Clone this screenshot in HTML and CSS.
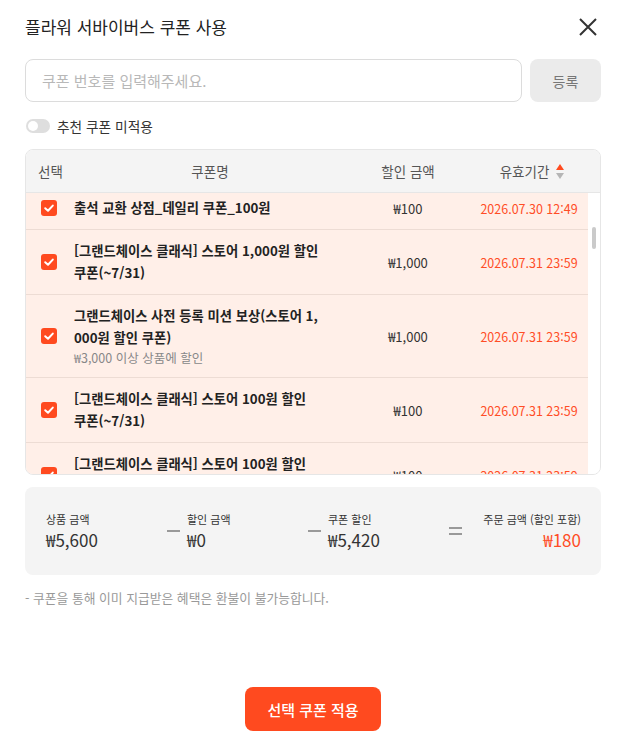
FILE: index.html
```html
<!DOCTYPE html>
<html lang="ko">
<head>
    <meta charset="utf-8">
    <title>쿠폰 사용</title>
    <link rel="stylesheet" href="styles.css">
</head>
<body>
    <div class="modal">
        <div class="modal-header">
            <h2>플라워 서바이버스 쿠폰 사용</h2>
            <button class="close-btn" aria-label="닫기">
                <svg width="20" height="20" viewBox="0 0 20 20"><path d="M2 2 L18 18 M18 2 L2 18" stroke="#333" stroke-width="2" fill="none"/></svg>
            </button>
        </div>

        <div class="code-row">
            <input type="text" class="code-input" placeholder="쿠폰 번호를 입력해주세요.">
            <button class="code-btn">등록</button>
        </div>

        <label class="auto-toggle">
            <span class="switch"><span class="knob"></span></span>
            추천 쿠폰 미적용
        </label>

        <div class="coupon-table">
            <div class="coupon-head">
                <div>선택</div>
                <div>쿠폰명</div>
                <div>할인 금액</div>
                <div class="sort-col">유효기간
                    <svg width="8" height="15" viewBox="0 0 8 15"><path d="M4 0 L8 6 L0 6 Z" fill="#ff4a1f"/><path d="M0 9 L8 9 L4 15 Z" fill="#b5b5b5"/></svg>
                </div>
            </div>
            <div class="coupon-list" id="coupon-list">
                <div class="coupon-row">
                    <div><span class="check"></span></div>
                    <div class="coupon-name">출석 교환 상점_데일리 쿠폰_100원</div>
                    <div class="coupon-amount">₩100</div>
                    <div class="coupon-date">2026.07.30 12:49</div>
                </div>
                <div class="coupon-row">
                    <div><span class="check"></span></div>
                    <div class="coupon-name">[그랜드체이스 클래식] 스토어 1,000원 할인<br>쿠폰(~7/31)</div>
                    <div class="coupon-amount">₩1,000</div>
                    <div class="coupon-date">2026.07.31 23:59</div>
                </div>
                <div class="coupon-row">
                    <div><span class="check"></span></div>
                    <div class="coupon-name">그랜드체이스 사전 등록 미션 보상(스토어 1,<br>000원 할인 쿠폰)
                        <small>₩3,000 이상 상품에 할인</small>
                    </div>
                    <div class="coupon-amount">₩1,000</div>
                    <div class="coupon-date">2026.07.31 23:59</div>
                </div>
                <div class="coupon-row">
                    <div><span class="check"></span></div>
                    <div class="coupon-name">[그랜드체이스 클래식] 스토어 100원 할인<br>쿠폰(~7/31)</div>
                    <div class="coupon-amount">₩100</div>
                    <div class="coupon-date">2026.07.31 23:59</div>
                </div>
                <div class="coupon-row">
                    <div><span class="check"></span></div>
                    <div class="coupon-name">[그랜드체이스 클래식] 스토어 100원 할인<br>쿠폰(~7/31)</div>
                    <div class="coupon-amount">₩100</div>
                    <div class="coupon-date">2026.07.31 23:59</div>
                </div>
                <div class="coupon-row">
                    <div><span class="check"></span></div>
                    <div class="coupon-name">[그랜드체이스 클래식] 스토어 500원 할인<br>쿠폰(~7/31)</div>
                    <div class="coupon-amount">₩500</div>
                    <div class="coupon-date">2026.07.31 23:59</div>
                </div>
                <div class="coupon-row">
                    <div><span class="check"></span></div>
                    <div class="coupon-name">출석 교환 상점_주간 쿠폰_300원</div>
                    <div class="coupon-amount">₩300</div>
                    <div class="coupon-date">2026.08.02 23:59</div>
                </div>
            </div>
            <span class="scroll-thumb"></span>
        </div>

        <div class="summary">
            <div class="sum-item">
                <span class="sum-label">상품 금액</span>
                <span class="sum-value">₩5,600</span>
            </div>
            <div class="op minus"></div>
            <div class="sum-item">
                <span class="sum-label">할인 금액</span>
                <span class="sum-value">₩0</span>
            </div>
            <div class="op minus"></div>
            <div class="sum-item">
                <span class="sum-label">쿠폰 할인</span>
                <span class="sum-value">₩5,420</span>
            </div>
            <div class="op equals"></div>
            <div class="sum-item total">
                <span class="sum-label">주문 금액 (할인 포함)</span>
                <span class="sum-value">₩180</span>
            </div>
        </div>

        <p class="notice">- 쿠폰을 통해 이미 지급받은 혜택은 환불이 불가능합니다.</p>

        <div class="modal-footer">
            <button class="apply-btn">선택 쿠폰 적용</button>
        </div>
    </div>

    <script>
        document.getElementById("coupon-list").scrollTop = 6;
    </script>
</body>
</html>
```

FILE: styles.css
```css
body {
    margin: 0;
    background: #fff;
    font-family: "Noto Sans CJK KR", "Noto Sans", sans-serif;
    color: #333;
}
button, input {
    font-family: inherit;
}
.modal {
    min-height: 100vh;
    box-sizing: border-box;
    padding: 0 24px 18px 25px;
    display: flex;
    flex-direction: column;
}

/* header */
.modal-header {
    display: flex;
    align-items: center;
    justify-content: space-between;
    height: 54px;
    margin-bottom: 5px;
}
.modal-header h2 {
    margin: 0;
    font-size: 17px;
    font-weight: 400;
    color: #222;
    line-height: 24px;
}
.close-btn {
    border: none;
    background: none;
    padding: 0;
    margin-right: 3px;
    width: 20px;
    height: 20px;
    cursor: pointer;
}

/* code input */
.code-row {
    display: flex;
    gap: 8px;
    height: 43px;
}
.code-input {
    flex: 1;
    border: 1px solid #dcdcdc;
    border-radius: 8px;
    padding: 0 16px;
    font-size: 15px;
    color: #333;
    outline: none;
}
.code-input::placeholder {
    color: #b8b8b8;
}
.code-btn {
    width: 71px;
    border: none;
    border-radius: 8px;
    background: #ebebeb;
    color: #777;
    font-size: 14px;
}

/* toggle */
.auto-toggle {
    display: flex;
    align-items: center;
    gap: 7px;
    margin: 16px 0 0 1px;
    font-size: 13.7px;
    line-height: 16px;
    color: #333;
}
.switch {
    width: 24px;
    height: 14px;
    border-radius: 7px;
    background: #dedede;
    display: flex;
    align-items: center;
    padding-left: 2px;
    box-sizing: border-box;
}
.knob {
    width: 10px;
    height: 10px;
    border-radius: 50%;
    background: #fff;
}

/* coupon table */
.coupon-table {
    position: relative;
    margin-top: 15px;
    height: 326px;
    box-sizing: border-box;
    border: 1px solid #e6e6e6;
    border-radius: 8px;
    overflow: hidden;
    display: flex;
    flex-direction: column;
}
.coupon-head,
.coupon-row {
    display: grid;
    grid-template-columns: 48px 272px 124px 1fr;
    align-items: center;
}
.coupon-head {
    height: 42px;
    flex: none;
    background: #f4f4f4;
    border-bottom: 1px solid #e6e6e6;
    font-size: 13.5px;
    color: #555;
    text-align: center;
}
.coupon-head > div:first-child {
    text-align: left;
    padding-left: 12px;
}
.sort-col {
    display: flex;
    align-items: center;
    justify-content: center;
    gap: 7px;
    padding-right: 6px;
}
.coupon-list {
    flex: 1;
    overflow-y: auto;
    scrollbar-width: none;
    padding-right: 12px;
    background: #fff;
}
.coupon-list::-webkit-scrollbar {
    display: none;
}
/* scrollbar thumb drawn over the white gutter */
.scroll-thumb {
    position: absolute;
    right: 4px;
    top: 77px;
    width: 4px;
    height: 22px;
    border-radius: 2px;
    background: #cacaca;
}
.coupon-row {
    background: #ffefe8;
    border-bottom: 1px solid #eddcd4;
    padding: 10px 0;
    font-size: 13px;
}
.coupon-row > div:first-child {
    display: flex;
    justify-content: center;
    padding-right: 2px;
}
.check {
    width: 16px;
    height: 16px;
    border-radius: 3px;
    background: #ff4a1f url("data:image/svg+xml,%3Csvg xmlns='http://www.w3.org/2000/svg' viewBox='0 0 16 16'%3E%3Cpath d='M4.2 8.2 L7 10.8 L11.8 5.6' stroke='%23fff' stroke-width='2' fill='none' stroke-linecap='round' stroke-linejoin='round'/%3E%3C/svg%3E") center / 16px 16px no-repeat;
}
.coupon-name {
    font-size: 13.3px;
    font-weight: 700;
    line-height: 22px;
    color: #222;
    white-space: nowrap;
}
.coupon-name small {
    display: block;
    font-size: 12.5px;
    font-weight: 400;
    line-height: 18px;
    color: #888;
}
.coupon-amount {
    text-align: center;
    color: #333;
}
.coupon-date {
    text-align: center;
    font-size: 12.5px;
    color: #ff4d26;
}

/* summary */
.summary {
    margin-top: 12px;
    height: 88px;
    box-sizing: border-box;
    background: #f4f4f4;
    border-radius: 8px;
    padding: 0 20px 0 21px;
    display: grid;
    grid-template-columns: 113px 28px 113px 28px 113px 28px 1fr;
    align-items: center;
}
.sum-item {
    display: flex;
    flex-direction: column;
    gap: 1px;
}
.sum-label {
    font-size: 11px;
    line-height: 16px;
    color: #333;
}
.sum-value {
    font-size: 17px;
    line-height: 24px;
    color: #333;
}
.total {
    align-items: flex-end;
}
.total .sum-value {
    color: #ff4d26;
}
.op {
    justify-self: center;
    width: 13px;
}
.minus {
    height: 2px;
    background: #999;
}
.equals {
    height: 8px;
    border-top: 2px solid #999;
    border-bottom: 2px solid #999;
    box-sizing: border-box;
}

.notice {
    margin: 14px 0 0;
    font-size: 12.8px;
    line-height: 18px;
    color: #999;
}

/* footer */
.modal-footer {
    margin-top: auto;
    display: flex;
    justify-content: center;
}
.apply-btn {
    width: 136px;
    height: 44px;
    border: none;
    border-radius: 8px;
    background: #ff4a1f;
    color: #fff;
    font-size: 15px;
    font-weight: 500;
    cursor: pointer;
}
```
